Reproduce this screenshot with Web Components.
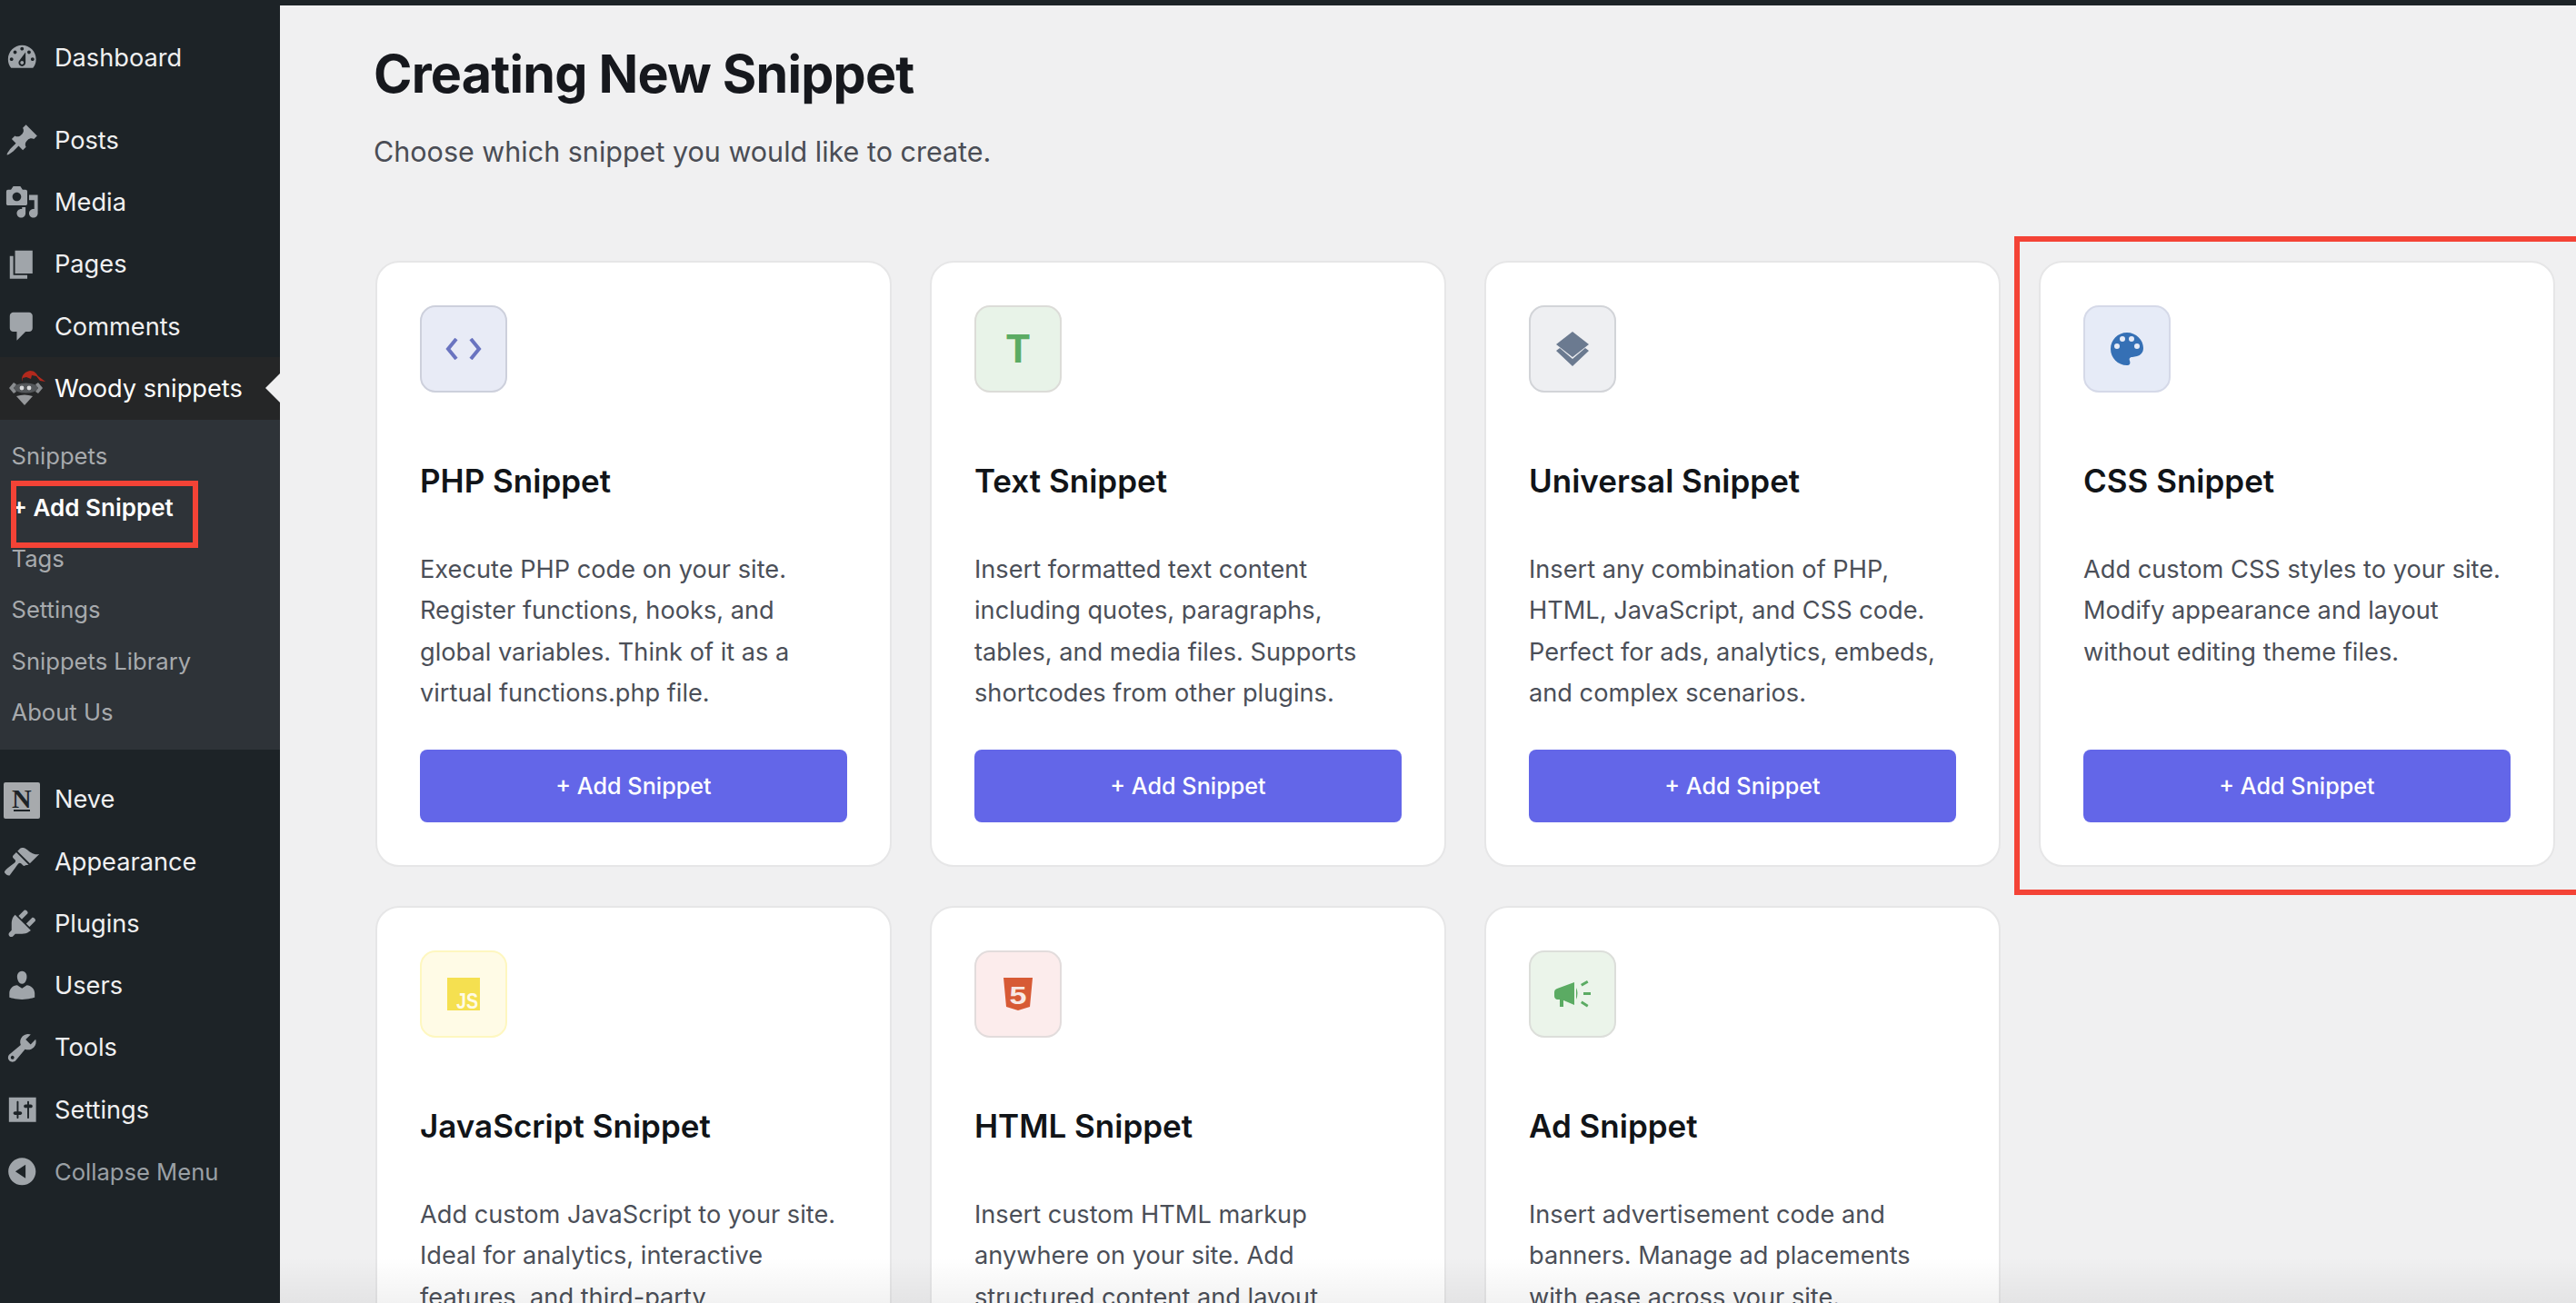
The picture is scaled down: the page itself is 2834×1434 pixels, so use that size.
<!DOCTYPE html>
<html>
<head>
<meta charset="utf-8">
<title>Creating New Snippet</title>
<style>
  html, body { margin: 0; height: 100%; overflow: hidden; background: #f0f0f1; }
  body { font-family: Inter, "Liberation Sans", sans-serif; }
  svg { display: block; }
</style>
</head>
<body>
<template id="menu-item-tpl">
  <style>
    :host { display: flex; align-items: center; height: 68.25px; position: relative; color: #f0f0f1; font-size: 27.2px; }
    :host([current]) { background: #252627; color: #fff; }
    :host([dim]) { color: #9aa0a5; font-size: 25.6px; }
    .icon { width: 38.5px; height: 38.5px; margin-left: 4.8px; margin-right: 16.7px; flex: none; fill: #a0a5aa; }
    .arrow { display: none; position: absolute; right: 0; top: 50%; margin-top: -16px; border: 16px solid transparent; border-left: 0; border-right-color: #f0f0f1; }
    :host([current]) .arrow { display: block; }
  </style>
  <div class="icon"><slot name="icon"></slot></div>
  <slot></slot>
  <span class="arrow"></span>
</template>

<template id="sub-item-tpl">
  <style>
    :host { display: flex; align-items: center; height: 56.4px; padding-left: 12.5px; color: #a7aaad; font-size: 25.6px; }
    :host([active]) { color: #fff; font-weight: 600; font-size: 26px; }
  </style>
  <slot></slot>
</template>

<template id="side-menu-tpl">
  <style>
    :host { display: block; width: 308px; flex: none; background: #1d2327; padding-top: 23px; box-sizing: border-box; }
    .sub { background: #2e3338; padding: 12px 0 13px; margin-bottom: 21px; }
  </style>
  <slot name="top"></slot>
  <div class="sub"><slot name="sub"></slot></div>
  <slot name="bottom"></slot>
</template>

<template id="page-head-tpl">
  <style>
    :host { display: block; margin-bottom: 100px; margin-left: -2px; }
    h1 { margin: 0; padding-top: 42px; font-size: 57.4px; line-height: 66px; font-weight: 700; color: #16181d; letter-spacing: -0.8px; }
    p { margin: 33px 0 0; font-size: 30.5px; line-height: 40px; color: #4a4d55; }
  </style>
  <h1><slot name="title"></slot></h1>
  <p><slot></slot></p>
</template>

<template id="snippet-card-tpl">
  <style>
    :host { display: flex; flex-direction: column; box-sizing: border-box; height: 667px; padding: 47px; background: #fff; border: 2px solid #e6e6e7; border-radius: 26px; }
    .badge { width: 96px; height: 96px; box-sizing: border-box; border-radius: 17px; border: 2px solid var(--line); background: var(--tint); display: flex; align-items: center; justify-content: center; flex: none; }
    h3 { margin: 74px 0 0; font-size: 35px; line-height: 47px; font-weight: 600; color: #111418; }
    p { margin: 50.5px 0 0; font-size: 27.2px; line-height: 45.5px; color: #4b4f58; height: 182px; }
    button { margin-top: auto; height: 80px; width: 100%; flex: none; border: 0; border-radius: 8px; background: #6366e8; color: #fff; font: 500 25.2px Inter, "Liberation Sans", sans-serif; }
  </style>
  <div class="badge"><slot name="icon"></slot></div>
  <h3><slot name="title"></slot></h3>
  <p><slot></slot></p>
  <button type="button">+ Add Snippet</button>
</template>

<template id="snippet-page-tpl">
  <style>
    :host { display: block; flex: 1; min-width: 0; padding-left: 105px; box-sizing: border-box; }
    .grid { display: grid; grid-template-columns: repeat(4, 568px); gap: 43px 42px; }
  </style>
  <slot name="head"></slot>
  <div class="grid"><slot></slot></div>
</template>

<template id="mark-box-tpl">
  <style>
    :host { position: absolute; box-sizing: border-box; border: 6px solid #f44336; pointer-events: none; }
  </style>
</template>

<template id="admin-frame-tpl">
  <style>
    :host { display: flex; flex-direction: column; position: relative; height: 1434px; overflow: hidden; background: #f0f0f1; }
    .bar { height: 6px; flex: none; background: #1d2327; }
    .body { display: flex; flex: 1; min-height: 0; }
    .fade { position: absolute; left: 308px; right: 0; bottom: 0; height: 50px; background: linear-gradient(rgba(0,0,0,0), rgba(0,0,0,.05)); pointer-events: none; }
  </style>
  <div class="bar"></div>
  <div class="body"><slot></slot></div>
  <div class="fade"></div>
  <slot name="marks"></slot>
</template>

<admin-frame>
  <side-menu>
    <menu-item slot="top"><svg slot="icon" viewBox="0 0 20 20"><path fill-rule="evenodd" d="M3.76 16h12.48c1.1-1.37 1.76-3.11 1.76-5 0-4.42-3.58-8-8-8s-8 3.58-8 8c0 1.89.66 3.63 1.76 5zM10 4c.55 0 1 .45 1 1s-.45 1-1 1-1-.45-1-1 .45-1 1-1zM6 6c.55 0 1 .45 1 1s-.45 1-1 1-1-.45-1-1 .45-1 1-1zm8 0c.55 0 1 .45 1 1s-.45 1-1 1-1-.45-1-1 .45-1 1-1zm-5.37 5.55L12 7v6c0 1.1-.9 2-2 2s-2-.9-2-2c0-.57.24-1.08.63-1.45zM4 10c.55 0 1 .45 1 1s-.45 1-1 1-1-.45-1-1 .45-1 1-1zm12 0c.55 0 1 .45 1 1s-.45 1-1 1-1-.45-1-1 .45-1 1-1zm-5 3c0-.55-.45-1-1-1s-1 .45-1 1 .45 1 1 1 1-.45 1-1z"/></svg>Dashboard</menu-item>
    <span slot="top" style="display:block;height:23px"></span>
    <menu-item slot="top"><svg slot="icon" viewBox="0 0 20 20"><path d="M10.44 3.02l1.82-1.82 6.36 6.35-1.83 1.82c-1.05-.68-2.48-.57-3.41.36l-.75.75c-.92.93-1.04 2.35-.35 3.41l-1.83 1.82-2.41-2.41-2.8 2.79c-.42.42-3.38 2.71-3.8 2.29s1.86-3.39 2.28-3.81l2.79-2.79L4.1 9.36l1.83-1.82c1.05.69 2.48.57 3.4-.36l.75-.75c.93-.92 1.05-2.35.36-3.41z"/></svg>Posts</menu-item>
    <menu-item slot="top"><svg slot="icon" viewBox="0 0 20 20"><path fill-rule="evenodd" d="M13 11V4c0-.55-.45-1-1-1h-1.67L9 1H5L3.67 3H2c-.55 0-1 .45-1 1v7c0 .55.45 1 1 1h10c.55 0 1-.45 1-1zM7 4.5c1.38 0 2.5 1.12 2.5 2.5S8.38 9.5 7 9.5 4.5 8.38 4.5 7 5.62 4.5 7 4.5zM14 6h5v10.5c0 1.38-1.12 2.5-2.5 2.5S14 17.88 14 16.5s1.12-2.5 2.5-2.5c.17 0 .34.02.5.05V9h-3V6zm-4 8.05V13h2v3.5c0 1.38-1.12 2.5-2.5 2.5S7 17.88 7 16.5 8.12 14 9.5 14c.17 0 .34.02.5.05z"/></svg>Media</menu-item>
    <menu-item slot="top"><svg slot="icon" viewBox="0 0 20 20"><path d="M6 15V2h10v13H6zm-1 1h8v2H3V5h2v11z"/></svg>Pages</menu-item>
    <menu-item slot="top"><svg slot="icon" viewBox="0 0 20 20"><path d="M5 2h9c1.1 0 2 .9 2 2v7c0 1.1-.9 2-2 2h-2l-5 5v-5H5c-1.1 0-2-.9-2-2V4c0-1.1.9-2 2-2z"/></svg>Comments</menu-item>
    <menu-item slot="top" current>
      <svg slot="icon" viewBox="0 0 44 42" style="width:44px;height:42px;margin-left:3.2px;margin-top:-2px">
        <ellipse cx="20.500" cy="21" rx="13" ry="5.500" fill="#55585b"/>
        <path d="M7 15 2 21l5 6 3-2-3-4 3-4z" fill="#8a8d90"/>
        <path d="M34 15l5 6-5 6-3-2 3-4-3-4z" fill="#8a8d90"/>
        <circle cx="16" cy="21" r="2.400" fill="#d8d9da"/><circle cx="24" cy="21" r="2.400" fill="#d8d9da"/>
        <path d="M10 30q9-3 18 0l-9 10z" fill="#96989b"/>
        <path d="M16 12c0-6 4-9 9-10 5 0 7 3 9 6l8 6-6-1-4-5-5-1-1 4-5-2-4 1-1 4z" fill="#b3291d"/>
      </svg>Woody snippets</menu-item>

    <sub-item slot="sub">Snippets</sub-item>
    <sub-item slot="sub" active>+ Add Snippet</sub-item>
    <sub-item slot="sub">Tags</sub-item>
    <sub-item slot="sub">Settings</sub-item>
    <sub-item slot="sub">Snippets Library</sub-item>
    <sub-item slot="sub">About Us</sub-item>

    <menu-item slot="bottom">
      <span slot="icon" style="display:flex;align-items:center;justify-content:center;flex-direction:column;width:40px;height:40px;margin-left:-1px;background:#a7aaad;border-radius:2px;color:#1d2327;font:700 30px/22px 'Liberation Serif',serif"><span>N</span><span style="width:18px;height:2px;background:#1d2327;margin-top:1px"></span></span>Neve</menu-item>
    <menu-item slot="bottom"><svg slot="icon" viewBox="0 0 20 20"><path d="M14.48 11.06L7.41 3.99l1.5-1.5c.5-.56 2.3-.47 3.51.32 1.21.8 1.43 1.28 2.91 2.1 1.18.64 2.45 1.26 4.45.85zm-.71.71L6.7 4.7 4.93 6.47c-.39.39-.39 1.02 0 1.41l1.06 1.06c.39.39.39 1.03 0 1.42-.6.6-6.07 4.42-6.07 5.6 0 .73 2.3 2.6 3.1 1.8.6-.6 4.4-6.1 5-6.7.39-.39 1.02-.39 1.41 0l1.06 1.06c.39.39 1.02.39 1.41 0z"/></svg>Appearance</menu-item>
    <menu-item slot="bottom"><svg slot="icon" viewBox="0 0 20 20"><path d="M13.11 4.36L9.87 7.6 8 5.73l3.24-3.24c.35-.34 1.05-.2 1.56.32.52.51.66 1.21.31 1.55zm-8 1.77l.91-1.12 9.01 9.01-1.19.84c-.71.71-2.63 1.16-3.82 1.16H6.14L4.9 17.26c-.59.59-1.54.59-2.12 0-.59-.58-.59-1.53 0-2.12l1.24-1.24v-3.88c0-1.13.4-3.19 1.09-3.89zm7.26 3.97l3.24-3.24c.34-.35 1.04-.21 1.55.31.52.51.66 1.21.31 1.55l-3.24 3.25z"/></svg>Plugins</menu-item>
    <menu-item slot="bottom"><svg slot="icon" viewBox="0 0 20 20"><path d="M10 9.25c-2.27 0-2.73-3.44-2.73-3.44C7 4.02 7.82 2 9.97 2c2.16 0 2.98 2.02 2.71 3.81 0 0-.41 3.44-2.68 3.44zm0 2.57L12.72 10c2.39 0 4.52 2.33 4.52 4.53v2.49s-3.65 1.13-7.24 1.13c-3.65 0-7.24-1.13-7.24-1.13v-2.49c0-2.25 1.94-4.48 4.47-4.48z"/></svg>Users</menu-item>
    <menu-item slot="bottom"><svg slot="icon" viewBox="0 0 20 20"><path fill-rule="evenodd" d="M16.68 9.77c-1.34 1.34-3.3 1.67-4.95.99l-5.41 6.52c-.99.99-2.59.99-3.58 0s-.99-2.59 0-3.57l6.52-5.42c-.68-1.65-.35-3.61.99-4.95 1.28-1.28 3.12-1.62 4.72-1.06l-2.89 2.89 2.82 2.82 2.86-2.87c.53 1.58.18 3.39-1.08 4.67zM3.81 16.21c.4.39 1.04.39 1.43 0 .4-.4.4-1.04 0-1.43-.39-.4-1.03-.4-1.43 0-.39.39-.39 1.03 0 1.43z"/></svg>Tools</menu-item>
    <menu-item slot="bottom"><svg slot="icon" viewBox="0 0 20 20"><path fill-rule="evenodd" d="M18 17V3H2.500v14zM8 11h1c.55 0 1 .45 1 1s-.45 1-1 1H8v1.500c0 .28-.22.5-.5.5s-.5-.22-.5-.5V13H6c-.55 0-1-.45-1-1s.45-1 1-1h1V5.500c0-.28.22-.5.5-.5s.5.22.5.5V11zm5-2h-1c-.55 0-1-.45-1-1s.45-1 1-1h1V5.500c0-.28.22-.5.5-.5s.5.22.5.5V7h1c.55 0 1 .45 1 1s-.45 1-1 1h-1v5.500c0 .28-.22.5-.5.5s-.5-.22-.5-.5V9z"/></svg>Settings</menu-item>
    <menu-item slot="bottom" dim><svg slot="icon" viewBox="0 0 20 20"><path fill-rule="evenodd" d="M10 2.16c4.33 0 7.84 3.51 7.84 7.84s-3.51 7.84-7.84 7.84S2.16 14.33 2.16 10 5.71 2.16 10 2.16zm2 11.72V6.12L6.18 9.97z"/></svg>Collapse Menu</menu-item>
  </side-menu>

  <snippet-page>
    <page-head slot="head"><span slot="title">Creating New Snippet</span>Choose which snippet you would like to create.</page-head>

    <snippet-card style="--tint:#e8ebf6;--line:#cdd0dc">
      <svg slot="icon" width="40" height="24" viewBox="0 0 40 24" fill="none" stroke="#6a74c0" stroke-width="4"><path d="M12 1 3 12l9 11M28 1l9 11-9 11"/></svg>
      <span slot="title">PHP Snippet</span>
      Execute PHP code on your site. Register functions, hooks, and global variables. Think of it as a virtual functions.php file.
    </snippet-card>

    <snippet-card style="--tint:#e8f3e8;--line:#dcdcd8">
      <span slot="icon" style="font:700 42px/42px Inter,'Liberation Sans',sans-serif;color:#5bab63">T</span>
      <span slot="title">Text Snippet</span>
      Insert formatted text content including quotes, paragraphs, tables, and media files. Supports shortcodes from other plugins.
    </snippet-card>

    <snippet-card style="--tint:#eeeff2;--line:#d2d4d8">
      <svg slot="icon" width="36" height="38" viewBox="0 0 36 38" fill="#6b7a90"><path d="M18 0l18 14-18 14L0 14z"/><path d="M0 21l4-3 14 12 14-12 4 3-18 17z"/></svg>
      <span slot="title">Universal Snippet</span>
      Insert any combination of PHP, HTML, JavaScript, and CSS code. Perfect for ads, analytics, embeds, and complex scenarios.
    </snippet-card>

    <snippet-card style="--tint:#e6ebf7;--line:#d5d9e8">
      <svg slot="icon" width="36" height="36" viewBox="0 0 36 36"><path fill="#3570b5" fill-rule="evenodd" d="M18 0C28 0 36 8 36 17c0 5-3 8-7 9l-5 1c-3 0-4 2-3 4 1 3 0 5-3 5C8 36 0 28 0 18S8 0 18 0zM7 12a3 3 0 1 0 0 6 3 3 0 0 0 0-6zM13 4a3 3 0 1 0 0 6 3 3 0 0 0 0-6zM23 4a3 3 0 1 0 0 6 3 3 0 0 0 0-6zM29 12a3 3 0 1 0 0 6 3 3 0 0 0 0-6z"/></svg>
      <span slot="title">CSS Snippet</span>
      Add custom CSS styles to your site. Modify appearance and layout without editing theme files.
    </snippet-card>

    <snippet-card style="--tint:#fffbe6;--line:#fef7c0">
      <svg slot="icon" width="36" height="36" viewBox="0 0 36 36"><rect width="36" height="36" fill="#f5e050"/><text x="34" y="34" text-anchor="end" textLength="24" lengthAdjust="spacingAndGlyphs" font-family="'Liberation Sans',sans-serif" font-weight="700" font-size="23" fill="#fffbe6">JS</text></svg>
      <span slot="title">JavaScript Snippet</span>
      Add custom JavaScript to your site. Ideal for analytics, interactive features, and third-party integrations.
    </snippet-card>

    <snippet-card style="--tint:#fcecec;--line:#e2dcdc">
      <svg slot="icon" width="32" height="36" viewBox="0 0 32 36"><path d="M0 0h32l-3 32-13 4-13-4z" fill="#d75a35"/><text x="16" y="29" text-anchor="middle" textLength="19" lengthAdjust="spacingAndGlyphs" font-family="'Liberation Sans',sans-serif" font-weight="700" font-size="27" fill="#f8e8e4">5</text></svg>
      <span slot="title">HTML Snippet</span>
      Insert custom HTML markup anywhere on your site. Add structured content and layout elements.
    </snippet-card>

    <snippet-card style="--tint:#ebf4ea;--line:#dcdeda">
      <svg slot="icon" width="40" height="32" viewBox="0 0 40 32" fill="#5bab63"><path d="M0 14q0-3 3-4L22 3v25L8 22H3q-3-1-3-4z"/><path d="M6 21h4v9H6zM24 9q3 6 0 13z"/><path d="M29 5l7-4 1.500 2.500-7 4zM32 14h8v3h-8zM29 26l1.500-2.500 7 4.500-1.500 2.500z"/></svg>
      <span slot="title">Ad Snippet</span>
      Insert advertisement code and banners. Manage ad placements with ease across your site.
    </snippet-card>
  </snippet-page>

  <mark-box slot="marks" style="left:12px;top:529px;width:206px;height:74px"></mark-box>
  <mark-box slot="marks" style="left:2216px;top:260px;width:700px;height:725px"></mark-box>
</admin-frame>

<script>
  // every element here just stamps its own template into an open shadow root
  function stamp(tag, tplId) {
    class Stamped extends HTMLElement {
      constructor() {
        super();
        this.attachShadow({ mode: "open" });
        this.shadowRoot.appendChild(document.getElementById(tplId).content.cloneNode(true));
      }
    }
    customElements.define(tag, Stamped);
  }

  stamp("menu-item", "menu-item-tpl");
  stamp("sub-item", "sub-item-tpl");
  stamp("side-menu", "side-menu-tpl");
  stamp("page-head", "page-head-tpl");
  stamp("snippet-card", "snippet-card-tpl");
  stamp("snippet-page", "snippet-page-tpl");
  stamp("mark-box", "mark-box-tpl");
  stamp("admin-frame", "admin-frame-tpl");
</script>
</body>
</html>
